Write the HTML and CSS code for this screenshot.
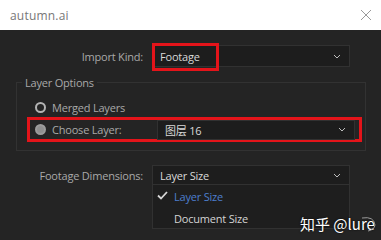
FILE: index.html
```html
<!DOCTYPE html>
<html lang="en">
<head>
    <meta charset="UTF-8">
    <title>autumn.ai</title>
    <link rel="stylesheet" href="styles.css">
</head>
<body>

<div class="titlebar">
    <span class="title">autumn.ai</span>
    <svg class="close" width="12" height="12" viewBox="0 0 12 12">
        <path d="M1 1 L11 11 M11 1 L1 11" stroke="#9a9a9a" stroke-width="1" fill="none"/>
    </svg>
</div>

<div class="dialog">
    <div class="row">
        <span class="label">Import Kind:</span>
        <div class="select">
            <span>Footage</span>
            <svg class="chevron" width="8" height="5" viewBox="0 0 8 5"><path d="M1 1 L4 4 L7 1" stroke="#bdbdbd" fill="none"/></svg>
            <span class="mark"></span>
        </div>
    </div>

    <fieldset class="group">
        <legend>Layer Options</legend>
        <div class="option">
            <span class="radio"></span>
            <span>Merged Layers</span>
        </div>
        <div class="option picked">
            <span class="radio on"></span>
            <span class="option-label">Choose Layer:</span>
            <div class="select small">
                <span>图层 16</span>
                <svg class="chevron" width="8" height="5" viewBox="0 0 8 5"><path d="M1 1 L4 4 L7 1" stroke="#bdbdbd" fill="none"/></svg>
            </div>
        </div>
    </fieldset>

    <div class="row dims">
        <span class="label">Footage Dimensions:</span>
        <div class="select open">
            <span>Layer Size</span>
            <svg class="chevron" width="8" height="5" viewBox="0 0 8 5"><path d="M1 1 L4 4 L7 1" stroke="#bdbdbd" fill="none"/></svg>
        </div>
    </div>
    <div class="menu">
        <div class="item active">
            <svg class="check" width="11" height="9" viewBox="0 0 11 9"><path d="M1 4.5 L4 7.5 L10 1" stroke="#d6d6d6" stroke-width="1.8" fill="none"/></svg>
            <span>Layer Size</span>
        </div>
        <div class="item">
            <span>Document Size</span>
        </div>
    </div>

    <div class="watermark">
        知乎 @lure
        <svg class="arc" width="18" height="16" viewBox="0 0 18 16"><path d="M2 2 Q14 0 15 9 Q14 14 8 15" stroke="#9a9a9a" fill="none"/></svg>
    </div>
</div>

</body>
</html>
```

FILE: styles.css
```css
body {
    margin: 0;
    width: 381px;
    height: 240px;
    overflow: hidden;
    font-family: "Open Sans", "Noto Sans", "Noto Sans CJK SC", sans-serif;
    font-size: 11px;
    letter-spacing: -0.2px;
    background-color: #242424;
}

.titlebar {
    height: 30px;
    background-color: #ffffff;
    display: flex;
    align-items: center;
    justify-content: space-between;
    padding: 0 9px 0 10px;
}

.title {
    color: #777777;
    font-size: 12px;
    letter-spacing: 0.2px;
}

.dialog {
    position: relative;
    height: 210px;
    background-color: #242424;
    padding-top: 15px;
    box-sizing: border-box;
    color: #a9a9a9;
}

.row {
    display: flex;
    align-items: center;
}

.label {
    width: 143px;
    text-align: right;
    margin-right: 9px;
}

.select {
    position: relative;
    width: 198px;
    height: 22px;
    box-sizing: border-box;
    background-color: #1d1d1d;
    border: 1px solid #313131;
    color: #d9d9d9;
    display: flex;
    align-items: center;
    justify-content: space-between;
    padding: 0 8px 0 7px;
}

.select.small {
    height: 20px;
    margin-left: auto;
    margin-right: 4px;
}

.select.open {
    height: 20px;
}

.mark {
    position: absolute;
    left: -1px;
    top: -3px;
    width: 67px;
    height: 28px;
    box-sizing: border-box;
    border: 3px solid #e4141a;
}

.group {
    margin: 8px 0 0 16px;
    width: 350px;
    box-sizing: border-box;
    border: 1px solid #323232;
    padding: 9px 0 8px 0;
}

.group legend {
    margin-left: 5px;
    padding: 0 3px;
    color: #a9a9a9;
}

.option {
    display: flex;
    align-items: center;
    height: 16px;
    padding-left: 18px;
}

.option.picked {
    height: 19px;
    margin: 2px 0 0 10px;
    box-sizing: content-box;
    width: 324px;
    padding-left: 5px;
    border: 3px solid #e4141a;
}

.option-label {
    width: 100px;
}

.radio {
    width: 11px;
    height: 11px;
    box-sizing: border-box;
    border: 2px solid #b3b3b3;
    border-radius: 50%;
    margin-right: 6px;
}

.radio.on {
    background-color: #8f8f8f;
    border-color: #9b9b9b;
}

.dims {
    margin-top: 14px;
}

.menu {
    margin-left: 152px;
    width: 198px;
    height: 44px;
    box-sizing: border-box;
    background-color: #1e1e1e;
    border: 1px solid #313131;
    border-top: none;
    color: #d4d4d4;
}

.item {
    height: 22px;
    display: flex;
    align-items: center;
    padding-left: 21px;
}

.item.active {
    position: relative;
    color: #4d7fce;
}

.check {
    position: absolute;
    left: 4px;
    top: 6px;
}

.watermark {
    position: absolute;
    left: 300px;
    top: 183px;
    color: #ffffff;
    font-size: 15px;
    letter-spacing: 0;
    font-family: "Noto Sans CJK SC", "Noto Sans", sans-serif;
    text-shadow: 0 0 2px #000000;
}

.arc {
    position: absolute;
    right: -3px;
    top: 3px;
}
```
